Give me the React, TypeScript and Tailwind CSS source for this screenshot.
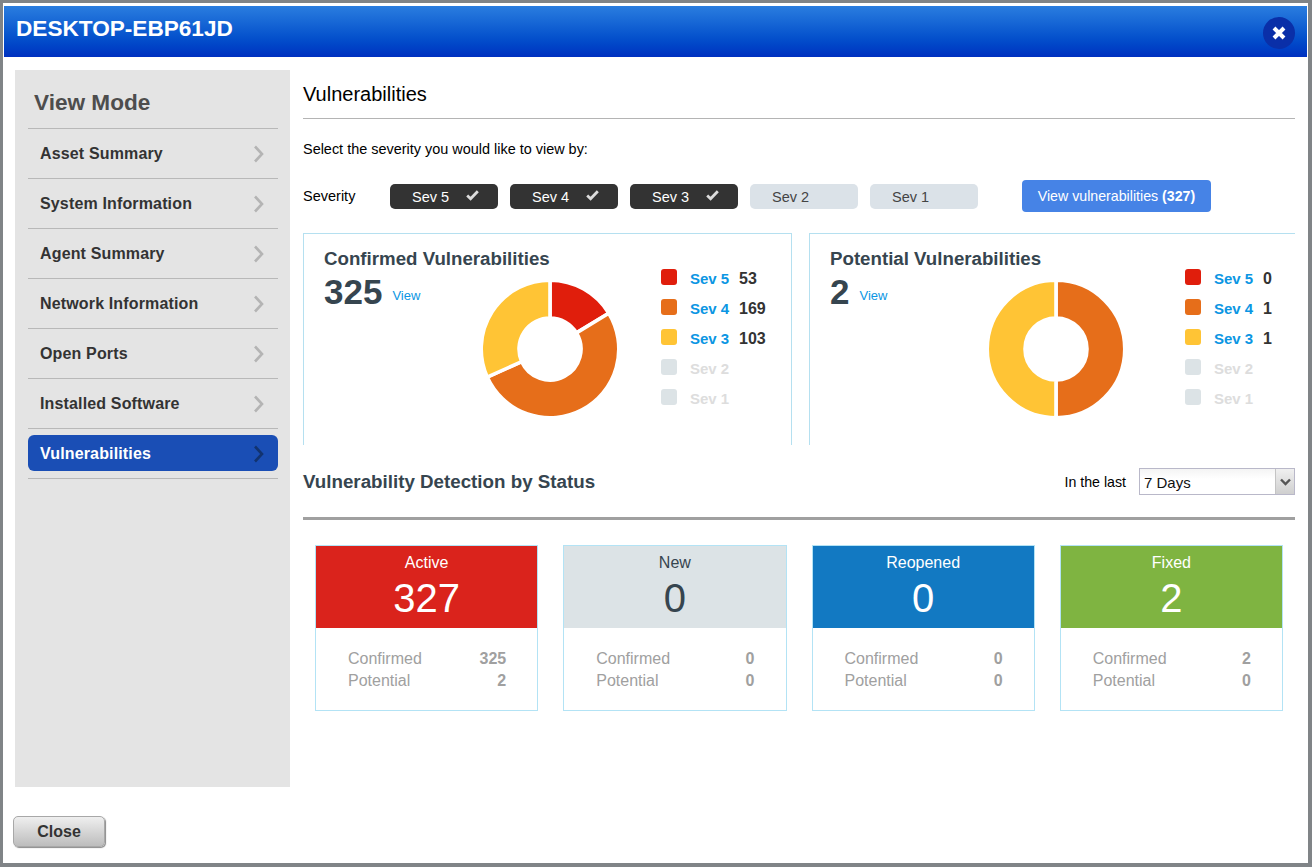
import React from 'react';

const FONT = '[font-family:"Liberation_Sans",Arial,sans-serif]';

const NAV_ITEMS = ['Asset Summary', 'System Information', 'Agent Summary', 'Network Information', 'Open Ports', 'Installed Software', 'Vulnerabilities'];

const RED = '#e01e0c';
const ORANGE = '#e66e1a';
const YELLOW = '#ffc435';
const EMPTY = '#dce3e6';

const Chevron: React.FC<{ color: string }> = ({ color }) => (
  <svg width="11" height="18" viewBox="0 0 11 18" fill="none" className="shrink-0">
    <path d="M2 1.5 L9 9 L2 16.5" stroke={color} strokeWidth="2.6" />
  </svg>
);

const Check: React.FC = () => (
  <svg width="13" height="11" viewBox="0 0 13 11" fill="none" className="mt-[-5px]">
    <path d="M1.2 5.5 L4.6 8.8 L11.8 1.2" stroke="#dcdcdc" strokeWidth="2.8" />
  </svg>
);

const Sidebar: React.FC = () => (
  <div className="w-[275px] h-[717px] bg-[#e4e4e4] px-[13px] shrink-0">
    <div className="h-[58px] flex items-center pl-[6px] pt-[8px] text-[22.6px] font-bold text-[#4d4d4d]">View Mode</div>
    {NAV_ITEMS.map((item) => {
      const active = item === 'Vulnerabilities';
      return (
        <div key={item} className="h-[50px] w-[250px] border-t border-[#b8b8b8] flex items-center">
          <div className={`w-full h-[36px] mt-[-1px] pt-[1px] flex items-center justify-between pl-[12px] pr-[14px] rounded-[6px] text-[16px] tracking-[0.15px] font-bold ${active ? 'bg-[#1a4eb5] text-white' : 'text-[#333333]'}`}>
            <span>{item}</span>
            <Chevron color={active ? '#12336f' : '#b4b4b4'} />
          </div>
        </div>
      );
    })}
    <div className="w-[250px] border-t border-[#b8b8b8]" />
  </div>
);

const SeverityPill: React.FC<{ label: string; on: boolean }> = ({ label, on }) => (
  <div className={`w-[108px] h-[25px] rounded-[5px] flex items-center pl-[22px] pt-[3px] text-[14.5px] ${on ? 'bg-[#333333] text-white' : 'bg-[#dbe2e8] text-[#444444]'}`}>
    <span className="w-[54px]">{label}</span>
    {on && <Check />}
  </div>
);

const polar = (r: number, frac: number) => {
  const a = frac * 2 * Math.PI;
  return [67 + r * Math.sin(a), 67 - r * Math.cos(a)];
};

const Donut: React.FC<{ values: { v: number; c: string }[] }> = ({ values }) => {
  const total = values.reduce((s, x) => s + x.v, 0);
  let acc = 0;
  return (
    <svg width="134" height="134" viewBox="0 0 134 134" className="shrink-0 overflow-visible">
      {values.map((x) => {
        const a0 = acc / total;
        acc += x.v;
        const a1 = acc / total;
        const large = a1 - a0 > 0.5 ? 1 : 0;
        const [ox0, oy0] = polar(68.8, a0);
        const [ox1, oy1] = polar(68.8, a1);
        const [ix1, iy1] = polar(31, a1);
        const [ix0, iy0] = polar(31, a0);
        return (
          <path
            key={x.c}
            d={`M${ox0} ${oy0} A68.8 68.8 0 ${large} 1 ${ox1} ${oy1} L${ix1} ${iy1} A31 31 0 ${large} 0 ${ix0} ${iy0} Z`}
            fill={x.c}
            stroke="#ffffff"
            strokeWidth="3.6"
          />
        );
      })}
    </svg>
  );
};

const LegendRow: React.FC<{ label: string; color: string; value?: number }> = ({ label, color, value }) => (
  <div className="h-[30px] flex items-center">
    <div className="w-[16px] h-[16px] rounded-[3px] mr-[13px] mt-[-3px]" style={{ backgroundColor: color }} />
    <span className={`w-[49px] pt-[2px] text-[15px] font-bold ${value === undefined ? 'text-[#dddddd]' : 'text-[#0b96e3]'}`}>{label}</span>
    {value !== undefined && <span className="text-[16px] font-bold text-[#333333] mt-[1px]">{value}</span>}
  </div>
);

const VulnCard: React.FC<{
  title: string;
  total: number;
  counts: number[];
  leftWidth: string;
  numWidth: string;
  className: string;
}> = ({ title, total, counts, leftWidth, numWidth, className }) => {
  const colors = [RED, ORANGE, YELLOW];
  return (
    <div className={`h-[212px] border-t border-l border-[#b5e0f0] pl-[20px] pt-[12px] flex ${className}`}>
      <div className={`${leftWidth} shrink-0`}>
        <div className="h-[24px] leading-[26px] text-[18.7px] font-bold text-[#36454f] whitespace-nowrap">{title}</div>
        <div className="flex pt-[12px]">
          <div className={`${numWidth} flex items-start mt-[-11px] shrink-0`}>
            <span className="text-[35px] leading-[42px] font-bold text-[#36454f]">{total}</span>
            <span className="text-[13px] text-[#0b96e3] ml-[10px] mt-[15px]">View</span>
          </div>
          <Donut values={counts.map((v, i) => ({ v, c: colors[i] })).filter((x) => x.v > 0)} />
        </div>
      </div>
      <div className="pt-[17px]">
        <LegendRow label="Sev 5" color={RED} value={counts[0]} />
        <LegendRow label="Sev 4" color={ORANGE} value={counts[1]} />
        <LegendRow label="Sev 3" color={YELLOW} value={counts[2]} />
        <LegendRow label="Sev 2" color={EMPTY} />
        <LegendRow label="Sev 1" color={EMPTY} />
      </div>
    </div>
  );
};

const StatusCard: React.FC<{ label: string; total: number; bg: string; confirmed: number; potential: number }> = ({ label, total, bg, confirmed, potential }) => (
  <div className="h-[166px] border border-[#b3e3f5]">
    <div className={`h-[82px] text-center pt-[8px] ${bg}`}>
      <div className="text-[16px] leading-[18px]">{label}</div>
      <div className="text-[40px] leading-[48px] mt-[2px]">{total}</div>
    </div>
    <div className="pt-[20px] pl-[32px] pr-[31px] text-[16px] leading-[22px] text-[#a0a0a0]">
      <div className="flex justify-between"><span>Confirmed</span><span className="font-bold">{confirmed}</span></div>
      <div className="flex justify-between"><span>Potential</span><span className="font-bold">{potential}</span></div>
    </div>
  </div>
);

const Main: React.FC = () => (
  <div className="w-[992px] ml-[13px] text-black">
    <div className="h-[49px] border-b border-[#b4b4b4] flex items-center text-[20px] pb-[1px]">Vulnerabilities</div>
    <div className="text-[14.45px] leading-[16px] mt-[22px]">Select the severity you would like to view by:</div>
    <div className="h-[32px] mt-[23px] flex items-center text-[14.5px]">
      <span className="w-[87px] pt-[2px]">Severity</span>
      <div className="flex gap-[12px] mt-[1px]">
        <SeverityPill label="Sev 5" on />
        <SeverityPill label="Sev 4" on />
        <SeverityPill label="Sev 3" on />
        <SeverityPill label="Sev 2" on={false} />
        <SeverityPill label="Sev 1" on={false} />
      </div>
      <button className="ml-[44px] w-[189px] h-[32px] pt-[2px] rounded-[4px] bg-[#4683e6] text-white text-[14.2px]">
        View vulnerabilities <b>(327)</b>
      </button>
    </div>
    <div className="flex mt-[21px] gap-[17px]">
      <VulnCard title="Confirmed Vulnerabilities" total={325} counts={[53, 169, 103]} leftWidth="w-[337px]" numWidth="w-[159px]" className="w-[489px] border-r" />
      <VulnCard title="Potential Vulnerabilities" total={2} counts={[0, 1, 1]} leftWidth="w-[355px]" numWidth="w-[159px]" className="w-[486px]" />
    </div>
    <div className="h-[75px] border-b-[3px] border-[#a0a0a0] flex items-start justify-between pt-[23px]">
      <span className="text-[18.75px] leading-[28px] font-bold text-[#36454f]">Vulnerability Detection by Status</span>
      <div className="flex items-center">
        <span className="text-[14.2px] mr-[13px] pt-[2px]">In the last</span>
        <div className="w-[156px] h-[27px] border border-[#b9b8c9] flex items-center justify-between pl-[4px] text-[15px] text-[#111111] bg-gradient-to-b from-[#f4f4f4] to-white to-40%">
          <span className="pt-[4px]">7 Days</span>
          <div className="w-[19px] h-full border-l border-[#c4c4c4] bg-gradient-to-b from-[#f0f0f0] to-[#cfcfcf] flex items-center justify-center">
            <svg width="11" height="8" viewBox="0 0 11 8" fill="none">
              <path d="M1 1.5 L5.5 6 L10 1.5" stroke="#555555" strokeWidth="2.4" />
            </svg>
          </div>
        </div>
      </div>
    </div>
    <div className="grid grid-cols-4 gap-[25px] px-[12px] mt-[25px]">
      <StatusCard label="Active" total={327} bg="bg-[#da231c] text-white" confirmed={325} potential={2} />
      <StatusCard label="New" total={0} bg="bg-[#dce3e6] text-[#36454f]" confirmed={0} potential={0} />
      <StatusCard label="Reopened" total={0} bg="bg-[#1279c2] text-white" confirmed={0} potential={0} />
      <StatusCard label="Fixed" total={2} bg="bg-[#7fb441] text-white" confirmed={2} potential={0} />
    </div>
  </div>
);

export default function App() {
  return (
    <div className={`w-[1312px] h-[867px] overflow-hidden bg-[#808487] pt-[3px] pl-[3px] pr-[4px] pb-[4px] ${FONT}`}>
      <div className="h-full bg-white pt-[3px] px-[1px] flex flex-col">
        <div className="h-[51px] shrink-0 bg-gradient-to-b from-[#2a7ddf] to-[#0030c0] flex items-start justify-between pl-[12px] pr-[12px] pt-[8px]">
          <span className="text-[22.6px] leading-[30px] font-bold text-white">DESKTOP-EBP61JD</span>
          <div className="w-[32px] h-[32px] mt-[3px] rounded-full bg-[#0a2fa8] flex items-center justify-center">
            <svg width="14" height="14" viewBox="0 0 14 14" fill="none">
              <path d="M2 2 L12 12 M12 2 L2 12" stroke="#ffffff" strokeWidth="4" />
            </svg>
          </div>
        </div>
        <div className="flex pl-[11px] pt-[13px]">
          <Sidebar />
          <Main />
        </div>
        <div className="pl-[9px] pt-[29px]">
          <button className="w-[92px] h-[31px] pt-[1px] rounded-[5px] border border-[#a8a8a8] bg-gradient-to-b from-[#efefef] to-[#bdbdbd] text-[16px] font-bold text-[#333333] shadow-[1px_1px_1px_#8a8a8a]">
            Close
          </button>
        </div>
      </div>
    </div>
  );
}
